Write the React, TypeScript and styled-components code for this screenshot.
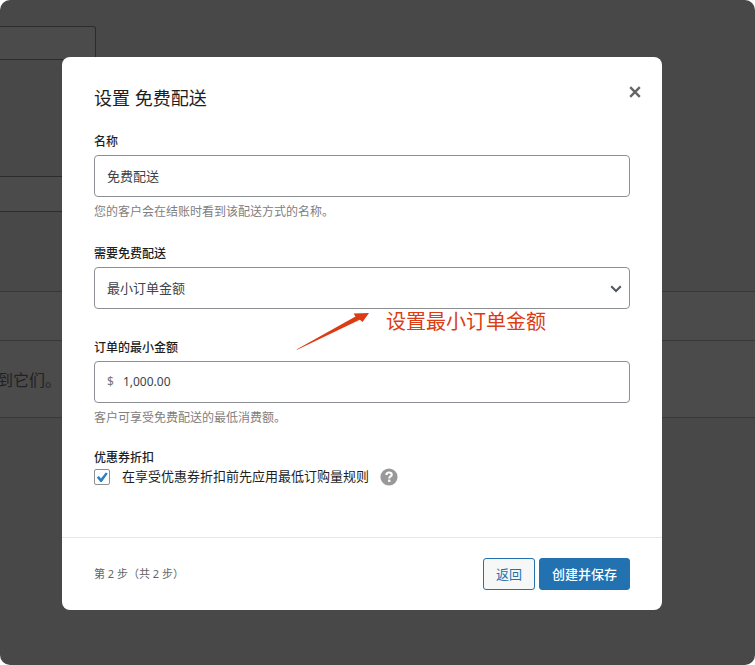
import React, { useState } from "react";
import styled, { createGlobalStyle } from "styled-components";

const GlobalStyle = createGlobalStyle`
  *, *::before, *::after { box-sizing: border-box; }
  body {
    margin: 0;
    background: #fff;
    font-family: "Noto Sans", "Noto Sans CJK SC", sans-serif;
    color: #1e1e1e;
  }
  button, input, select { font-family: inherit; margin: 0; }
`;

const Screen = styled.div`
  display: grid;
  grid-template-columns: minmax(0, 1fr);
  min-height: 100vh;
  border-radius: 10px;
  overflow: hidden;
  background: #484848;
`;

const Backdrop = styled.div`
  grid-area: 1 / 1;
  padding-top: 26px;
`;

const DimBox = styled.div`
  width: 96px;
  height: 34px;
  border: 1px solid #2c2c2c;
  border-left: 0;
  border-radius: 0 3px 3px 0;
  background: #4b4b4b;
`;

const DimRow = styled.div`
  width: 50%;
  height: 36px;
  margin-top: 116px;
  border: solid #2c2c2c;
  border-width: 1px 0;
  background: #4b4b4b;
`;

const DimTable = styled.div`
  margin-top: 79px;
  border: solid #383838;
  border-width: 1px 0;
  background: #4b4b4b;
`;

const DimHead = styled.div`
  height: 49px;
  border-bottom: 1px solid #383838;
`;

const DimText = styled.p`
  margin: 0;
  padding: 27px 0 25px;
  text-indent: -3px;
  line-height: 24px;
  font-size: 16px;
  color: #222;
`;

const Overlay = styled.div`
  grid-area: 1 / 1;
  padding: 57px 93px 55px 62px;
  position: relative;
`;

const Modal = styled.section`
  border-radius: 8px;
  background: #fff;
`;

const Header = styled.header`
  display: flex;
  justify-content: space-between;
  align-items: flex-start;
  padding: 24px 16px 0 32px;
`;

const Title = styled.h1`
  margin: 4px 0 0;
  font-size: 18px;
  line-height: 26px;
  font-weight: 400;
`;

const CloseButton = styled.button`
  display: flex;
  padding: 4px;
  border: 0;
  background: none;
  color: #646970;
`;

const Form = styled.form`
  padding: 22px 32px 0;
`;

const Field = styled.div<{ $gap: number }>`
  position: relative;
  display: flex;
  flex-direction: column;
  margin-bottom: ${(p) => p.$gap}px;
`;

const Label = styled.label`
  margin-bottom: 4px;
  font-size: 12px;
  line-height: 18px;
  font-weight: 500;
`;

const InputBox = styled.div`
  display: flex;
  align-items: center;
  height: 42px;
  border: 1px solid #8c8f94;
  border-radius: 4px;
`;

const TextInput = styled.input<{ $small?: boolean }>`
  flex: 1;
  min-width: 0;
  height: 100%;
  padding: 0 12px 2px;
  border: 0;
  background: none;
  outline: 0;
  font-size: ${(p) => (p.$small ? 12 : 13)}px;
  color: #3c434a;
`;

const Currency = styled.span`
  padding-left: 12px;
  margin-right: -3px;
  font-size: 12px;
  line-height: 20px;
  color: #757575;
`;

const Select = styled.select`
  appearance: none;
  flex: 1;
  min-width: 0;
  height: 100%;
  padding: 0 12px;
  border: 0;
  background: none;
  outline: 0;
  font-size: 13px;
  color: #3c434a;
`;

const SelectArrow = styled.svg`
  margin: 0 7px 0 -19px;
  pointer-events: none;
`;

const Hint = styled.p`
  margin: 6px 0 0;
  font-size: 12px;
  line-height: 18px;
  color: #808080;
`;

const Annotation = styled.div`
  position: absolute;
  left: 202px;
  top: 66px;
  display: flex;
  align-items: flex-start;
  gap: 16px;
  white-space: nowrap;
  font-size: 20px;
  line-height: 22px;
  color: #dc3c14;
  pointer-events: none;
`;

const Group = styled.fieldset`
  margin: 0;
  padding: 0;
  border: 0;
`;

const Legend = styled.legend`
  padding: 0;
  font-size: 12px;
  line-height: 18px;
  font-weight: 500;
`;

const CheckRow = styled.div`
  display: flex;
  align-items: center;
  height: 20px;
`;

const CheckLabel = styled.label`
  margin: 0 11px 0 12px;
  padding-bottom: 2px;
  font-size: 13px;
  line-height: 18px;
`;

const Checkbox = styled.input`
  appearance: none;
  width: 16px;
  height: 16px;
  border: 1px solid #8c8f94;
  border-radius: 2px;
  background: #fff;
`;

const CheckWrap = styled.span`
  display: grid;
  place-items: center;
  > * { grid-area: 1 / 1; }
  > svg { pointer-events: none; }
`;

const HelpButton = styled.button`
  display: flex;
  padding: 0;
  border: 0;
  background: none;
`;

const Footer = styled.footer`
  display: flex;
  align-items: center;
  gap: 4px;
  margin-top: 50px;
  padding: 20px 32px;
  border-top: 1px solid #e6e6e6;
`;

const Step = styled.span`
  flex: 1;
  font-size: 11px;
  line-height: 16px;
  color: #646464;
`;

const Button = styled.button<{ $primary?: boolean }>`
  height: 32px;
  padding: 0 12px 2px;
  border: 1px solid #2271b1;
  border-radius: 3px;
  background: ${(p) => (p.$primary ? "#2271b1" : "#f6f7f7")};
  color: ${(p) => (p.$primary ? "#fff" : "#2271b1")};
  font-size: 13px;
  font-weight: ${(p) => (p.$primary ? 500 : 400)};
  white-space: nowrap;
`;

export default function App() {
  const [name, setName] = useState("免费配送");
  const [amount, setAmount] = useState("1,000.00");
  const [checked, setChecked] = useState(true);

  return (
    <>
      <GlobalStyle />
      <Screen>
        <Backdrop>
          <DimBox />
          <DimRow />
          <DimTable>
            <DimHead />
            <DimText>到它们。</DimText>
          </DimTable>
        </Backdrop>
        <Overlay>
          <Modal role="dialog" aria-labelledby="dialog-title">
            <Header>
              <Title id="dialog-title">设置 免费配送</Title>
              <CloseButton type="button" aria-label="关闭">
                <svg width="14" height="14" viewBox="0 0 14 14" fill="none" stroke="#666" strokeWidth="2.4">
                  <path d="M2.2 2.2 11.8 11.8M11.8 2.2 2.2 11.8" />
                </svg>
              </CloseButton>
            </Header>
            <Form>
              <Field $gap={24}>
                <Label htmlFor="name">名称</Label>
                <InputBox>
                  <TextInput id="name" value={name} onChange={(e) => setName(e.target.value)} />
                </InputBox>
                <Hint>您的客户会在结账时看到该配送方式的名称。</Hint>
              </Field>
              <Field $gap={30}>
                <Label htmlFor="requires">需要免费配送</Label>
                <InputBox>
                  <Select id="requires" defaultValue="min">
                    <option value="min">最小订单金额</option>
                  </Select>
                  <SelectArrow width="12" height="12" viewBox="0 0 12 12" fill="none" stroke="#50575e" strokeWidth="2">
                    <path d="M1.2 4.2 6 9 10.8 4.2" />
                  </SelectArrow>
                </InputBox>
                <Annotation>
                  <svg width="74" height="40" viewBox="0 0 74 40" fill="#dc3c14">
                    <path d="M0.5 38.6 59.5 5.6 57.6 2.4 73 2 66.5 11 63.8 8.8 1.2 38.8Z" />
                  </svg>
                  <span>设置最小订单金额</span>
                </Annotation>
              </Field>
              <Field $gap={22}>
                <Label htmlFor="amount">订单的最小金额</Label>
                <InputBox>
                  <Currency>$</Currency>
                  <TextInput $small id="amount" value={amount} onChange={(e) => setAmount(e.target.value)} />
                </InputBox>
                <Hint>客户可享受免费配送的最低消费额。</Hint>
              </Field>
              <Group>
                <Legend>优惠券折扣</Legend>
                <CheckRow>
                  <CheckWrap>
                    <Checkbox
                      id="coupon"
                      type="checkbox"
                      checked={checked}
                      onChange={(e) => setChecked(e.target.checked)}
                    />
                    {checked && (
                      <svg width="16" height="16" viewBox="0 0 16 16" fill="#2b7fc4">
                        <path d="M2.8 8.6 4.8 7.1 7 9.6 11.8 3.4 13.8 4.6 7.8 13H6.4Z" />
                      </svg>
                    )}
                  </CheckWrap>
                  <CheckLabel htmlFor="coupon">在享受优惠券折扣前先应用最低订购量规则</CheckLabel>
                  <HelpButton type="button" aria-label="帮助">
                    <svg width="18" height="18" viewBox="0 0 18 18" fill="none">
                      <circle cx="9" cy="9" r="8.6" fill="#999" />
                      <path
                        d="M6.4 7C6.4 5.4 7.5 4.5 9.1 4.5S11.7 5.4 11.7 6.7C11.7 8.5 9.2 8.5 9.2 10.5"
                        stroke="#fff"
                        strokeWidth="2.2"
                      />
                      <rect x="8.1" y="11.6" width="2.3" height="2.3" fill="#fff" />
                    </svg>
                  </HelpButton>
                </CheckRow>
              </Group>
            </Form>
            <Footer>
              <Step>第 2 步（共 2 步）</Step>
              <Button type="button">返回</Button>
              <Button type="button" $primary>
                创建并保存
              </Button>
            </Footer>
          </Modal>
        </Overlay>
      </Screen>
    </>
  );
}
